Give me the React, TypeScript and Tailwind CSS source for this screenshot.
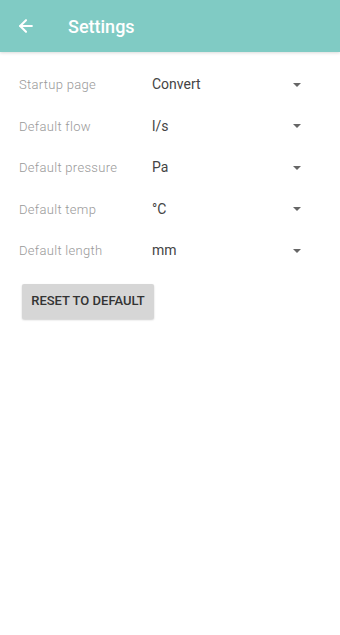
import { ArrowLeft } from "lucide-react";

const rows = [
  { label: "Startup page", value: "Convert" },
  { label: "Default flow", value: "l/s" },
  { label: "Default pressure", value: "Pa" },
  { label: "Default temp", value: "°C" },
  { label: "Default length", value: "mm" },
];

export default function App() {
  return (
    <div className="w-[340px] h-[635px] bg-white" style={{ fontFamily: "Roboto, 'Liberation Sans', sans-serif" }}>
      {/* Toolbar */}
      <div className="h-[52px] bg-[#80cbc4] flex items-center shadow-[0_1px_3px_rgba(0,0,0,0.15)]">
        <ArrowLeft size={20} strokeWidth={2.5} className="text-white ml-[16px]" />
        <h1 className="ml-[32px] text-white text-[18px] font-medium">Settings</h1>
      </div>

      {/* Settings rows */}
      <div className="pt-[12px]">
        {rows.map((r) => (
          <div key={r.label} className="h-[41.5px] flex items-center">
            <span className="w-[152px] pl-[19px] text-[13px] tracking-[0.3px] text-[#999] font-light">{r.label}</span>
            <span className="flex-1 text-[14px] text-[#444]">{r.value}</span>
            <svg width="8" height="4" viewBox="0 0 8 4" className="mr-[39px]">
              <path d="M0 0h8L4 4z" fill="#666" />
            </svg>
          </div>
        ))}
      </div>

      <div className="pl-[22px] pt-[12px]">
        <button className="h-[35px] w-[132px] bg-[#d6d6d6] rounded-[2px] shadow-[0_1px_2px_rgba(0,0,0,0.2)] text-[13px] font-medium text-[#333]">
          RESET TO DEFAULT
        </button>
      </div>
    </div>
  );
}
